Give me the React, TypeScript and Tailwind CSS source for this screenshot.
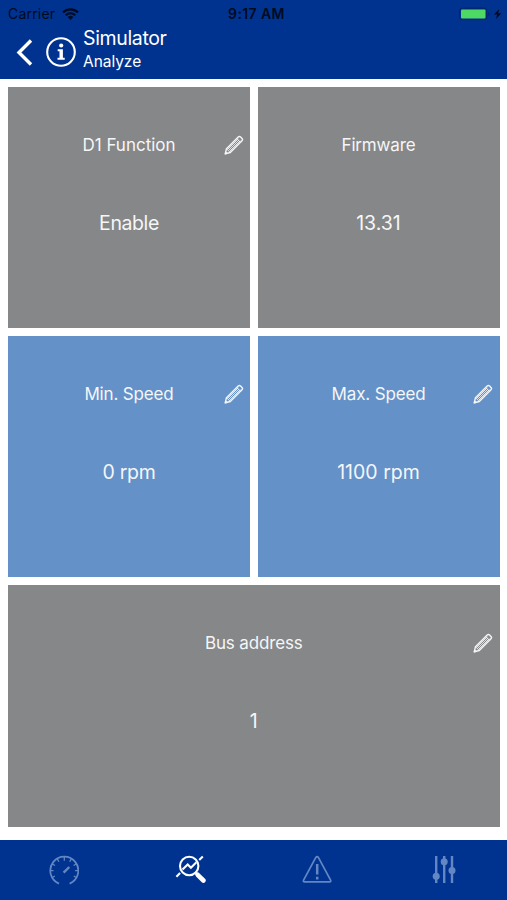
import type { ReactNode } from 'react';

interface TileProps {
  label: string;
  value: string;
  tone?: 'gray' | 'blue';
  editable?: boolean;
  wide?: boolean;
  labelClass?: string;
  valueClass?: string;
}

function PencilIcon() {
  return (
    <svg width="20" height="20" viewBox="0 0 20 20" fill="none" stroke="currentColor" strokeLinejoin="round" strokeLinecap="round">
      <path d="M1.2 18.8 2.5 13.7 14.2 2Q15.4.8 16.6 2L18 3.4Q19.2 4.6 18 5.8L6.3 17.5Z" strokeWidth="1.4" />
      <path d="M2.5 13.7 6.3 17.5M4 14 14 4M6 16 16 6M12.7 3.5 16.5 7.3" strokeWidth="0.9" />
      <path d="m5 15 9.8-9.8" strokeWidth="0.8" />
      <path d="m1.2 18.8.6-2.2 1.6 1.6Z" fill="currentColor" strokeWidth="0.6" />
    </svg>
  );
}

function Tile({ label, value, tone = 'gray', editable, wide, labelClass = 'tracking-[-0.15px]', valueClass = '' }: TileProps) {
  return (
    <div
      className={`relative flex flex-col items-center text-[#f5f6f7] ${tone === 'blue' ? 'bg-[#6491c8]' : 'bg-[#868788]'} ${
        wide ? 'col-span-2' : ''
      }`}
    >
      <p className={`mt-[46px] text-[17px] leading-6 whitespace-nowrap ${labelClass}`}>{label}</p>
      <p className={`mt-[52px] text-[19.5px] leading-7 whitespace-nowrap ${valueClass}`}>{value}</p>
      {editable && (
        <button className="absolute top-[48px] right-[6.5px]" aria-label={`Edit ${label}`}>
          <PencilIcon />
        </button>
      )}
    </div>
  );
}

function StatusBar() {
  return (
    <div className="grid h-7 grid-cols-3 items-center text-[#000a20]">
      <div className="flex items-center gap-[7px] pl-[8px]">
        <span className="text-[14px] leading-4 tracking-[0.2px]">Carrier</span>
        <svg width="17" height="12" viewBox="0 0 17 12" fill="none" stroke="currentColor" strokeWidth="2.2">
          <path d="M1 4.4a10.6 10.6 0 0 1 15 0M3.8 7.2a6.7 6.7 0 0 1 9.4 0" />
          <path d="M5.7 9.1a4 4 0 0 1 5.6 0L8.5 11.9Z" fill="currentColor" stroke="none" />
        </svg>
      </div>
      <span className="pl-[6px] text-center text-[14px] leading-4 font-semibold tracking-[0.4px] whitespace-nowrap">9:17 AM</span>
      <div className="flex items-center justify-end pr-[5px]">
        <svg width="43" height="14" viewBox="0 0 43 14">
          <rect x=".7" y="1.2" width="27" height="11.5" rx="2.5" fill="none" stroke="#052365" />
          <rect x="2" y="2.5" width="24.5" height="9" rx="1" fill="#4cd964" />
          <path d="M29.5 4.8q2.2 2.2 0 4.4Z" fill="#052365" />
          <path d="m40.2 2-5.2 5.6h3.1L37 12l5.4-5.8h-3.2Z" fill="currentColor" />
        </svg>
      </div>
    </div>
  );
}

function Header() {
  return (
    <header className="h-[79px] shrink-0 bg-[#00338f] text-white">
      <StatusBar />
      <div className="flex items-start pl-[15px]">
        <button aria-label="Back" className="mt-[11px]">
          <svg width="18" height="27" viewBox="0 0 18 27" fill="none" stroke="currentColor" strokeWidth="3.4">
            <path d="M16 1.5 4 13.5l12 12" />
          </svg>
        </button>
        <button aria-label="Info" className="mt-[9px] ml-[13px]">
          <svg width="30" height="30" viewBox="0 0 30 30" fill="none">
            <circle cx="15" cy="15" r="13.8" stroke="currentColor" strokeWidth="2.1" />
            <circle cx="15.2" cy="8.5" r="2.1" fill="currentColor" />
            <path d="M11.7 12.2h5.2v8.6h1.8v2h-7.2v-2h2v-6.6h-1.8Z" fill="currentColor" />
          </svg>
        </button>
        <div className="ml-[7px]">
          <h1 className="mt-[-3px] text-[19.5px] leading-[26px] tracking-[-0.35px]">Simulator</h1>
          <h2 className="text-[15.5px] leading-[22px] tracking-[-0.05px]">Analyze</h2>
        </div>
      </div>
    </header>
  );
}

function Tab({ active, name, children }: { active?: boolean; name: string; children: ReactNode }) {
  return (
    <button aria-label={name} className={`flex justify-center pt-[14px] ${active ? 'text-white' : 'text-[#6387c4]'}`}>
      <svg width="32" height="32" viewBox="0 0 32 32" fill="none" stroke="currentColor">
        {children}
      </svg>
    </button>
  );
}

function TabBar() {
  return (
    <nav className="grid h-[60px] shrink-0 grid-cols-4 bg-[#00338f]">
      <Tab name="Dashboard">
        <g transform="translate(.8 .7)">
          <path d="M11.2 28.9A14 14 0 1 1 21.8 28.9" strokeWidth="1.7" />
          <path
            d="M16.5 2v4M9.5 4.2l1.6 2.9M4.2 9l3 1.8M2.5 16h3.2M4.2 23l2.8-1.7M28.8 9l-3 1.8M30.5 16h-3.2M28.8 23 26 21.3M23.5 4.2l-1.6 2.9"
            strokeWidth="1.3"
          />
          <path d="m15.8 18 5.7-5.7" strokeWidth="2.4" />
        </g>
      </Tab>
      <Tab name="Analyze" active>
        <circle cx="15.2" cy="12" r="9.2" strokeWidth="2.1" />
        <path d="m8.5 15.5 5.2-5 3.2 3.2 5.5-5.5" strokeWidth="2.1" />
        <path d="m21.8 19 2 2" strokeWidth="2.5" />
        <path d="m23.7 20.8 5.7 5.7" strokeWidth="4.6" strokeLinecap="round" />
        <path d="m25.2 6 3.6-3.6M2.4 22.7l3.7-3.7" strokeWidth="2.1" />
      </Tab>
      <Tab name="Alarms">
        <path d="M14.7 3.7 2.6 26.1q-.8 1.8 1 1.8h25q1.8 0 1-1.8L17.5 3.7q-1.4-2.1-2.8 0Z" strokeWidth="1.7" />
        <path d="M16.2 10v10.5M16.2 22.8v2.6" strokeWidth="2.5" />
      </Tab>
      <Tab name="Settings">
        <path d="M8.2 2v27M16.2 2v27M24 2v27" strokeWidth="2.4" />
        <g fill="currentColor" stroke="none">
          <circle cx="8.2" cy="22.2" r="3.5" />
          <circle cx="16.2" cy="7.8" r="3.5" />
          <circle cx="24" cy="16.5" r="3.5" />
        </g>
      </Tab>
    </nav>
  );
}

export default function App() {
  return (
    <div className="flex h-[900px] w-[507px] flex-col overflow-hidden bg-white font-[Inter,sans-serif]">
      <Header />
      <main className="grid min-h-0 flex-1 grid-cols-2 grid-rows-3 gap-[7.5px] pt-[7.5px] pr-[7.5px] pb-[13.5px] pl-[8px]">
        <Tile label="D1 Function" value="Enable" editable labelClass="" valueClass="tracking-[-0.4px]" />
        <Tile label="Firmware" value="13.31" />
        <Tile label="Min. Speed" value="0 rpm" tone="blue" editable valueClass="tracking-[-0.3px]" />
        <Tile label="Max. Speed" value="1100 rpm" tone="blue" editable />
        <Tile label="Bus address" value="1" editable wide />
      </main>
      <TabBar />
    </div>
  );
}
